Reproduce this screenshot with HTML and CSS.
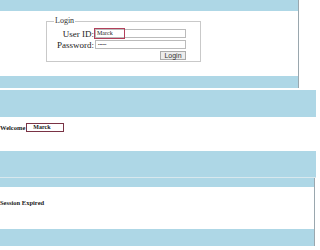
FILE: index.html
```html
<!DOCTYPE html>
<html lang="en">
<head>
  <meta charset="UTF-8" />
  <title>Login</title>
  <link rel="stylesheet" href="styles.css">
</head>
<body>
  <div class="panel panel-login">
    <div class="band top"></div>
    <div class="main">
      <fieldset class="login-box">
        <legend>Login</legend>
        <div class="row">
          <label for="uid">User ID:</label>
          <div class="field">
            <span class="mark">Marck</span>
          </div>
        </div>
        <div class="row">
          <label for="pwd">Password:</label>
          <div class="field">
            <span class="dots">&bull;&bull;&bull;&bull;&bull;&bull;</span>
          </div>
        </div>
        <div class="actions">
          <button>Login</button>
        </div>
      </fieldset>
    </div>
    <div class="band bottom"></div>
  </div>

  <div class="panel panel-welcome">
    <div class="band top"></div>
    <div class="main">
      <p class="welcome">Welcome <span class="name">Marck</span></p>
    </div>
    <div class="band bottom"></div>
  </div>

  <div class="panel panel-expired">
    <div class="band top"></div>
    <div class="main">
      <p class="expired">Session Expired</p>
    </div>
    <div class="band bottom"></div>
  </div>
</body>
</html>
```

FILE: styles.css
```css
* {
  box-sizing: border-box;
  margin: 0;
  padding: 0;
}

body {
  background: #ffffff;
  font-family: "Liberation Serif", serif;
  color: #222;
}

.panel {
  display: flex;
  flex-direction: column;
  border-right: 1px solid #9aa7ae;
}

.band {
  background: #aed7e6;
}

.main {
  background: #ffffff;
}

/* login screen */
.panel-login {
  width: 299px;
  margin-bottom: 2px;
}
.panel-login .top { height: 11px; }
.panel-login .main { height: 65px; padding: 6px 0 0 46px; }
.panel-login .bottom { height: 12px; }

.login-box {
  width: 155px;
  height: 45px;
  border: 1px solid #c9c9c9;
  padding: 3px 14px 0 8px;
  font-size: 9px;
}

.login-box legend {
  padding: 0 1px;
  margin-left: -1px;
  font-size: 8px;
  line-height: 8px;
  color: #333;
}

.row {
  display: flex;
  align-items: center;
  height: 11px;
}

.row label {
  width: 39px;
  text-align: right;
  font-size: 9px;
  margin-right: 1px;
}

.field {
  flex: 1;
  height: 9px;
  border: 1px solid #bbbbbb;
  display: flex;
  align-items: center;
}

.mark {
  display: inline-block;
  width: 31px;
  height: 11px;
  border: 1px solid #b2405b;
  font-size: 6px;
  line-height: 9px;
  padding-left: 2px;
  margin-left: -2px;
}

.dots {
  font-size: 4px;
  padding-left: 2px;
  letter-spacing: 0;
}

.actions {
  display: flex;
  justify-content: flex-end;
  margin-top: 1px;
}

.actions button {
  font-family: "Liberation Sans", sans-serif;
  font-size: 7px;
  width: 26px;
  height: 9px;
  line-height: 7px;
  border: 1px solid #aaa;
  background: #ececec;
  color: #333;
}

/* welcome screen */
.panel-welcome {
  width: 316px;
  border-right: none;
  border-bottom: 1px solid #d8e8ee;
}
.panel-welcome .top { height: 27px; }
.panel-welcome .main { height: 34px; padding-top: 6px; }
.panel-welcome .bottom { height: 26px; }

.welcome {
  font-size: 6.5px;
  font-weight: bold;
  display: flex;
  align-items: center;
  gap: 1px;
}

.name {
  display: inline-block;
  width: 38px;
  height: 9px;
  border: 1px solid #7a3345;
  font-size: 6px;
  font-weight: bold;
  line-height: 7px;
  padding-left: 6px;
}

/* session expired */
.panel-expired {
  width: 315px;
}
.panel-expired .top { height: 9px; }
.panel-expired .main { height: 42px; padding-top: 12px; }
.panel-expired .bottom { height: 17px; }

.expired {
  font-size: 6.5px;
  font-weight: bold;
}
```
